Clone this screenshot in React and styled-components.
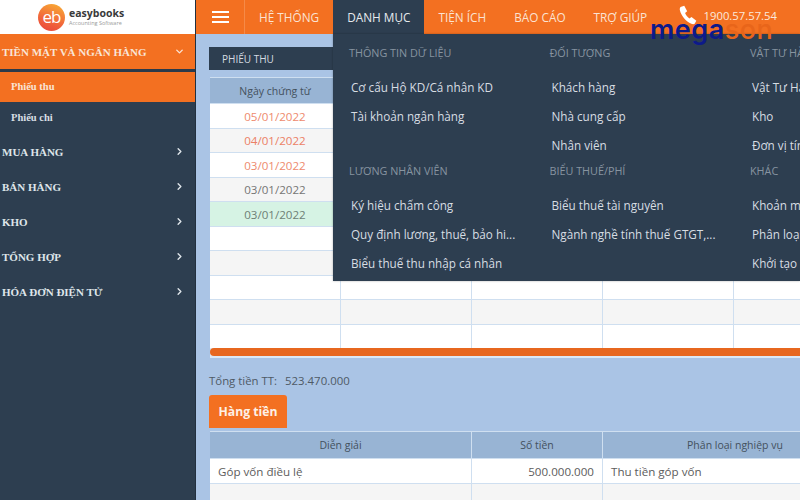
import React from 'react'
import styled, { createGlobalStyle } from 'styled-components'
import { ChevronRight, ChevronDown } from 'lucide-react'

const GlobalStyle = createGlobalStyle`
  html, body { margin:0; padding:0; width:800px; height:500px; overflow:hidden; }
  * { box-sizing:border-box; }
  body { font-family:"Open Sans","Noto Sans",sans-serif; }
`

const Page = styled.div`
  position:relative;
  display:flex;
  width:800px;
  height:500px;
  overflow:hidden;
  background:#aac4e5;
`
const Sidebar = styled.aside`
  width:196px;
  flex:none;
  background:#2d3e50;
  border-right:1px solid #22303f;
`
const LogoBox = styled.div`
  height:34px;
  background:#fff;
  display:flex;
  align-items:center;
  padding-left:38px;
  gap:4px;
`
const LogoMark = styled.div`
  width:27px;
  height:27px;
  border-radius:50%;
  background:linear-gradient(200deg,#f9b233 0%,#f26b3a 55%,#e8413c 100%);
  color:#fff;
  font-size:17px;
  letter-spacing:-1px;
  line-height:25px;
  text-align:center;
`
const LogoText = styled.div`
  display:flex;
  flex-direction:column;
`
const LogoName = styled.span`
  font-weight:700;
  font-size:10.5px;
  line-height:11px;
  color:#3a3a3a;
`
const LogoSub = styled.span`
  font-size:5.5px;
  line-height:8px;
  color:#9a9a9a;
`
const MenuGroup = styled.div`
  height:35px;
  display:flex;
  align-items:center;
  justify-content:space-between;
  padding:0 10px 0 2px;
  background:${p => (p.$active ? '#f37021' : 'transparent')};
  color:${p => (p.$active ? '#f9e4d6' : '#dfe5ea')};
  font-family:"Liberation Serif",serif;
  font-weight:700;
  font-size:11px;
  white-space:nowrap;
`
const GroupSep = styled.div`
  height:3px;
  background:#2b3a4a;
`
const SubItem = styled.div`
  height:${p => p.$h}px;
  display:flex;
  align-items:center;
  padding:0 0 1px 11px;
  background:${p => (p.$active ? '#f37021' : 'transparent')};
  color:${p => (p.$active ? '#f9e4d6' : '#d8dfe5')};
  font-family:"Liberation Serif",serif;
  font-weight:700;
  font-size:10.5px;
`
const SubList = styled.div`
  margin-bottom:1px;
`
const Main = styled.div`
  flex:1;
  min-width:0;
  display:flex;
  flex-direction:column;
`
const TopBar = styled.header`
  height:34px;
  flex:none;
  background:#f37021;
  display:flex;
  align-items:stretch;
  color:#fbe3d3;
  font-size:11.8px;
`
const Burger = styled.div`
  width:49px;
  border-right:1px solid #f58a48;
  display:flex;
  flex-direction:column;
  justify-content:center;
  gap:3px;
  padding-left:16px;
  & > span { display:block; width:17px; height:2px; background:#fff; }
`
const NavItem = styled.div`
  display:flex;
  align-items:center;
  padding:0 14px;
  background:${p => (p.$active ? '#2d3e50' : 'transparent')};
  color:${p => (p.$active ? '#e6eaee' : '#fbe3d3')};
  white-space:nowrap;
`
const Phone = styled.div`
  display:flex;
  align-items:center;
  gap:6px;
  margin-left:auto;
  padding:0 23px 4px 0;
  font-size:11.3px;
  color:#fbe9dc;
`
const Content = styled.main`
  flex:1;
  min-height:0;
  padding:13px 0 0 13px;
  display:flex;
  flex-direction:column;
`
const TitleBar = styled.div`
  height:23px;
  width:130px;
  flex:none;
  background:#2d3e50;
  color:#d5dbe1;
  font-size:10px;
  line-height:25px;
  padding-left:13px;
`
const Grid = styled.div`
  display:grid;
  grid-template-columns:${p => p.$cols};
  grid-template-rows:${p => p.$head}px;
  grid-auto-rows:${p => p.$row}px;
  gap:1px;
  margin:${p => p.$mt}px 0 0 1px;
  background:#cfdff0;
  border-top:1px solid #cfdff0;
  width:${p => p.$w}px;
  flex:none;
`
const HeadCell = styled.div`
  background:#98b4d4;
  color:#44515e;
  font-size:10.5px;
  display:flex;
  align-items:center;
  justify-content:center;
  white-space:nowrap;
`
const Cell = styled.div`
  background:${p => p.$bg || '#fff'};
  color:${p => p.$color || '#5c5c5c'};
  font-size:11.6px;
  display:flex;
  align-items:center;
  justify-content:${p => p.$align || 'center'};
  padding:${p => p.$top || 0}px ${p => (p.$align ? 8 : 0)}px 0;
  white-space:nowrap;
`
const ScrollTrack = styled.div`
  background:#dce8f5;
  padding:0 0 2px;
  margin-left:1px;
  flex:none;
`
const Scrollbar = styled.div`
  height:8px;
  background:#e7671f;
  border-radius:4px 0 0 4px;
`
const Total = styled.div`
  margin-top:14px;
  height:17px;
  flex:none;
  display:flex;
  gap:8px;
  color:#4f5a66;
  font-size:11.4px;
  align-items:center;
`
const Tab = styled.div`
  margin-top:6px;
  width:78px;
  height:33px;
  flex:none;
  background:#f37021;
  border-radius:3px 3px 0 0;
  color:#fdf0e6;
  font-weight:700;
  font-size:12.2px;
  display:flex;
  align-items:center;
  justify-content:center;
`
const Dropdown = styled.div`
  position:absolute;
  left:333px;
  top:34px;
  width:467px;
  height:247px;
  background:#2d3e50;
  overflow:hidden;
  display:grid;
  grid-template-columns:repeat(3,200.5px);
  padding-left:16px;
  grid-template-rows:118px 118px;
  box-shadow:0 0 2px rgba(0,0,0,.3);
`
const DropCol = styled.div`
  padding-top:12px;
  white-space:nowrap;
`
const DropHead = styled.div`
  color:#8794a0;
  font-size:10.8px;
  line-height:14px;
  margin-bottom:19px;
`
const DropItem = styled.div`
  color:#d7dde3;
  font-size:11.7px;
  line-height:16px;
  height:28.8px;
  padding-left:2px;
`
const Watermark = styled.div`
  position:absolute;
  left:650px;
  top:13px;
  font-family:Inter,"Open Sans",sans-serif;
  font-weight:600;
  font-size:27px;
  line-height:34px;
  letter-spacing:.5px;
  color:#0d1a8a;
  pointer-events:none;
`
const Son = styled.span`
  color:#e8651a;
  font-weight:500;
`

const PhoneIcon = () => (
  <svg width="20" height="22" viewBox="0 0 24 24" fill="#fff">
    <path d="M3 2.500 7.500 1l3.500 6.500-2.500 2.200c.9 2.600 2.800 5 5.200 6.500l2.500-1.800L22 19l-2 3.600c-1 .6-2.600.6-4 0C9.500 20 3.800 13 2.200 6 2 4.800 2.300 3.400 3 2.500Z" />
  </svg>
)

const navs = ['HỆ THỐNG', 'DANH MỤC', 'TIỆN ÍCH', 'BÁO CÁO', 'TRỢ GIÚP']
const dates = [
  ['05/01/2022', '#ee8a6e', '#fff'],
  ['04/01/2022', '#ec7f66', '#f5f5f5'],
  ['03/01/2022', '#ee8a6e', '#fff'],
  ['03/01/2022', '#757575', '#f5f5f5'],
  ['03/01/2022', '#6e7f76', '#d6f3e4'],
  ['', '', '#fff'],
  ['', '', '#f5f5f5'],
  ['', '', '#fff'],
  ['', '', '#f5f5f5'],
  ['', '', '#fff'],
]
const sideItems = ['MUA HÀNG', 'BÁN HÀNG', 'KHO', 'TỔNG HỢP', 'HÓA ĐƠN ĐIỆN TỬ']
const dropColumns = [
  ['THÔNG TIN DỮ LIỆU', ['Cơ cấu Hộ KD/Cá nhân KD', 'Tài khoản ngân hàng']],
  ['ĐỐI TƯỢNG', ['Khách hàng', 'Nhà cung cấp', 'Nhân viên']],
  ['VẬT TƯ HÀNG HÓA', ['Vật Tư Hàng Hóa', 'Kho', 'Đơn vị tính']],
  ['LƯƠNG NHÂN VIÊN', ['Ký hiệu chấm công', 'Quy định lương, thuế, bảo hi...', 'Biểu thuế thu nhập cá nhân']],
  ['BIỂU THUẾ/PHÍ', ['Biểu thuế tài nguyên', 'Ngành nghề tính thuế GTGT,...']],
  ['KHÁC', ['Khoản mục', 'Phân loại', 'Khởi tạo']],
]

export default function App() {
  return (
    <Page>
      <GlobalStyle />
      <Sidebar>
        <LogoBox>
          <LogoMark>eb</LogoMark>
          <LogoText>
            <LogoName>easybooks</LogoName>
            <LogoSub>Accounting Software</LogoSub>
          </LogoText>
        </LogoBox>
        <MenuGroup $active>
          TIỀN MẶT VÀ NGÂN HÀNG
          <ChevronDown size={11} strokeWidth={3} />
        </MenuGroup>
        <GroupSep />
        <SubList>
          <SubItem $active $h={30}>Phiếu thu</SubItem>
          <SubItem $h={31}>Phiếu chi</SubItem>
        </SubList>
        {sideItems.map(s => (
          <MenuGroup key={s}>
            {s}
            <ChevronRight size={11} strokeWidth={3} />
          </MenuGroup>
        ))}
      </Sidebar>
      <Main>
        <TopBar>
          <Burger><span /><span /><span /></Burger>
          {navs.map((n, i) => (
            <NavItem key={n} $active={i === 1}>{n}</NavItem>
          ))}
          <Phone>
            <PhoneIcon />
            1900.57.57.54
          </Phone>
        </TopBar>
        <Content>
          <TitleBar>PHIẾU THU</TitleBar>
          <Grid $cols="130px 130px 130px 130px 76px" $head={25} $row={23.5} $mt={7} $w={600}>
            <HeadCell>Ngày chứng từ</HeadCell>
            <HeadCell /><HeadCell /><HeadCell /><HeadCell />
            {dates.map((d, i) => (
              <React.Fragment key={i}>
                <Cell $bg={d[2]} $color={d[1]} $top={1}>{d[0]}</Cell>
                <Cell $bg={d[2]} /><Cell $bg={d[2]} /><Cell $bg={d[2]} /><Cell $bg={d[2]} />
              </React.Fragment>
            ))}
          </Grid>
          <ScrollTrack><Scrollbar /></ScrollTrack>
          <Total><span>Tổng tiền TT:</span><span>523.470.000</span></Total>
          <Tab>Hàng tiền</Tab>
          <Grid $cols="261px 130px 264px" $head={26} $row={24} $mt={3} $w={660}>
            <HeadCell>Diễn giải</HeadCell>
            <HeadCell>Số tiền</HeadCell>
            <HeadCell>Phân loại nghiệp vụ</HeadCell>
            <Cell $align="flex-start">Góp vốn điều lệ</Cell>
            <Cell $align="flex-end">500.000.000</Cell>
            <Cell $align="flex-start">Thu tiền góp vốn</Cell>
            <Cell $bg="#f5f5f5" /><Cell $bg="#f5f5f5" /><Cell $bg="#f5f5f5" />
          </Grid>
        </Content>
      </Main>
      <Dropdown>
        {dropColumns.map(([h, items]) => (
          <DropCol key={h}>
            <DropHead>{h}</DropHead>
            {items.map(t => <DropItem key={t}>{t}</DropItem>)}
          </DropCol>
        ))}
      </Dropdown>
      <Watermark>mega<Son>son</Son></Watermark>
    </Page>
  )
}
